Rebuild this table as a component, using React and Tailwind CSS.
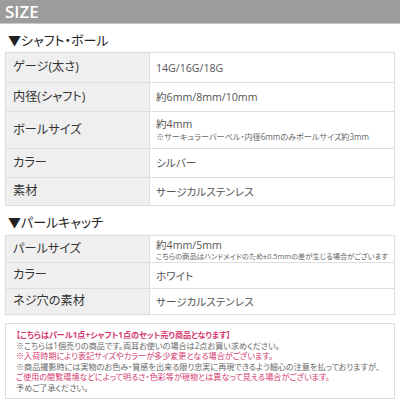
const SHAFT_ROWS = [
  { label: 'ゲージ(太さ)', value: '14G/16G/18G', h: 'h-[29px]' },
  { label: '内径(シャフト)', value: '約6mm/8mm/10mm', h: 'h-[29px]' },
  {
    label: 'ボールサイズ',
    value: '約4mm',
    note: '※サーキュラーバーベル・内径6mmのみボールサイズ約3mm',
    noteCls: 'text-[8.1px] leading-[12px]',
    h: 'h-[37px]',
  },
  { label: 'カラー', value: 'シルバー', h: 'h-[29px]' },
  { label: '素材', value: 'サージカルステンレス', h: 'h-[28px]' },
];

const PEARL_ROWS = [
  {
    label: 'パールサイズ',
    value: '約4mm/5mm',
    note: 'こちらの商品はハンドメイドのため±0.5mmの差が生じる場合がございます',
    noteCls: 'text-[7.3px] leading-[9px]',
    h: 'h-[26px]',
  },
  { label: 'カラー', value: 'ホワイト', h: 'h-[26px]' },
  { label: 'ネジ穴の素材', value: 'サージカルステンレス', h: 'h-[26px]' },
];

const NOTES = [
  { text: '【こちらはパール1点+シャフト1点のセット売り商品となります】', cls: 'text-[#d33a70] font-bold' },
  { text: '※こちらは1個売りの商品です。両耳お使いの場合は2点お買い求めください。', cls: 'text-[#666]' },
  { text: '※入荷時期により表記サイズやカラーが多少変更となる場合がございます。', cls: 'text-[#d33a70]' },
  { text: '※商品撮影時には実物のお色み・質感を出来る限り忠実に再現できるよう細心の注意を払っておりますが、', cls: 'text-[#666]' },
  { text: 'ご使用の閲覧環境などによって明るさ・色彩等が現物とは異なって見える場合がございます。', cls: 'text-[#d33a70]' },
  { text: '予めご了承ください。', cls: 'text-[#666]' },
];

function SpecTable({ rows }) {
  return (
    <div className="border border-[#dedede] shadow-[0_0_2px_rgba(0,0,0,0.06)]">
      {rows.map((r, i) => (
        <div key={r.label} className={`flex ${r.h} ${i > 0 ? 'border-t border-[#dedede]' : ''}`}>
          <div className="w-[144px] shrink-0 flex items-center pl-[7px] bg-[#efefef] border-r border-[#dedede] text-[12.2px] text-[#333]">
            {r.label}
          </div>
          <div className="flex-1 flex flex-col justify-center pl-[6px] text-[#555]">
            <span className="text-[10.6px] leading-[14px]">{r.value}</span>
            {r.note && <span className={`${r.noteCls} text-[#666] whitespace-nowrap`}>{r.note}</span>}
          </div>
        </div>
      ))}
    </div>
  );
}

export default function App() {
  return (
    <div className="w-[400px] h-[400px] bg-white overflow-hidden font-['Open_Sans','Noto_Sans_CJK_JP',sans-serif] [font-feature-settings:'palt']">
      {/* Header */}
      <div className="h-[24px] bg-[#9c9c9c] border-b border-[#c8c8c8] flex items-center px-[5px]">
        <span className="text-white text-[17px] font-semibold leading-none">SIZE</span>
      </div>

      <div className="px-[5px]">
        <h2 className="pt-[10px] pb-[5px] pl-[3px] text-[13px] leading-[13px] text-[#222]">▼シャフト・ボール</h2>
        <SpecTable rows={SHAFT_ROWS} />

        <h2 className="pt-[10px] pb-[6px] pl-[3px] text-[13px] leading-[13px] text-[#222]">▼パールキャッチ</h2>
        <SpecTable rows={PEARL_ROWS} />

        {/* Notice */}
        <div className="mt-[8px] border border-[#dedede] pt-[6px] pb-[5px] pl-[10px] text-[8.1px] leading-[10.5px] whitespace-nowrap">
          {NOTES.map(n => (
            <p key={n.text} className={n.cls}>{n.text}</p>
          ))}
        </div>
      </div>
    </div>
  );
}
